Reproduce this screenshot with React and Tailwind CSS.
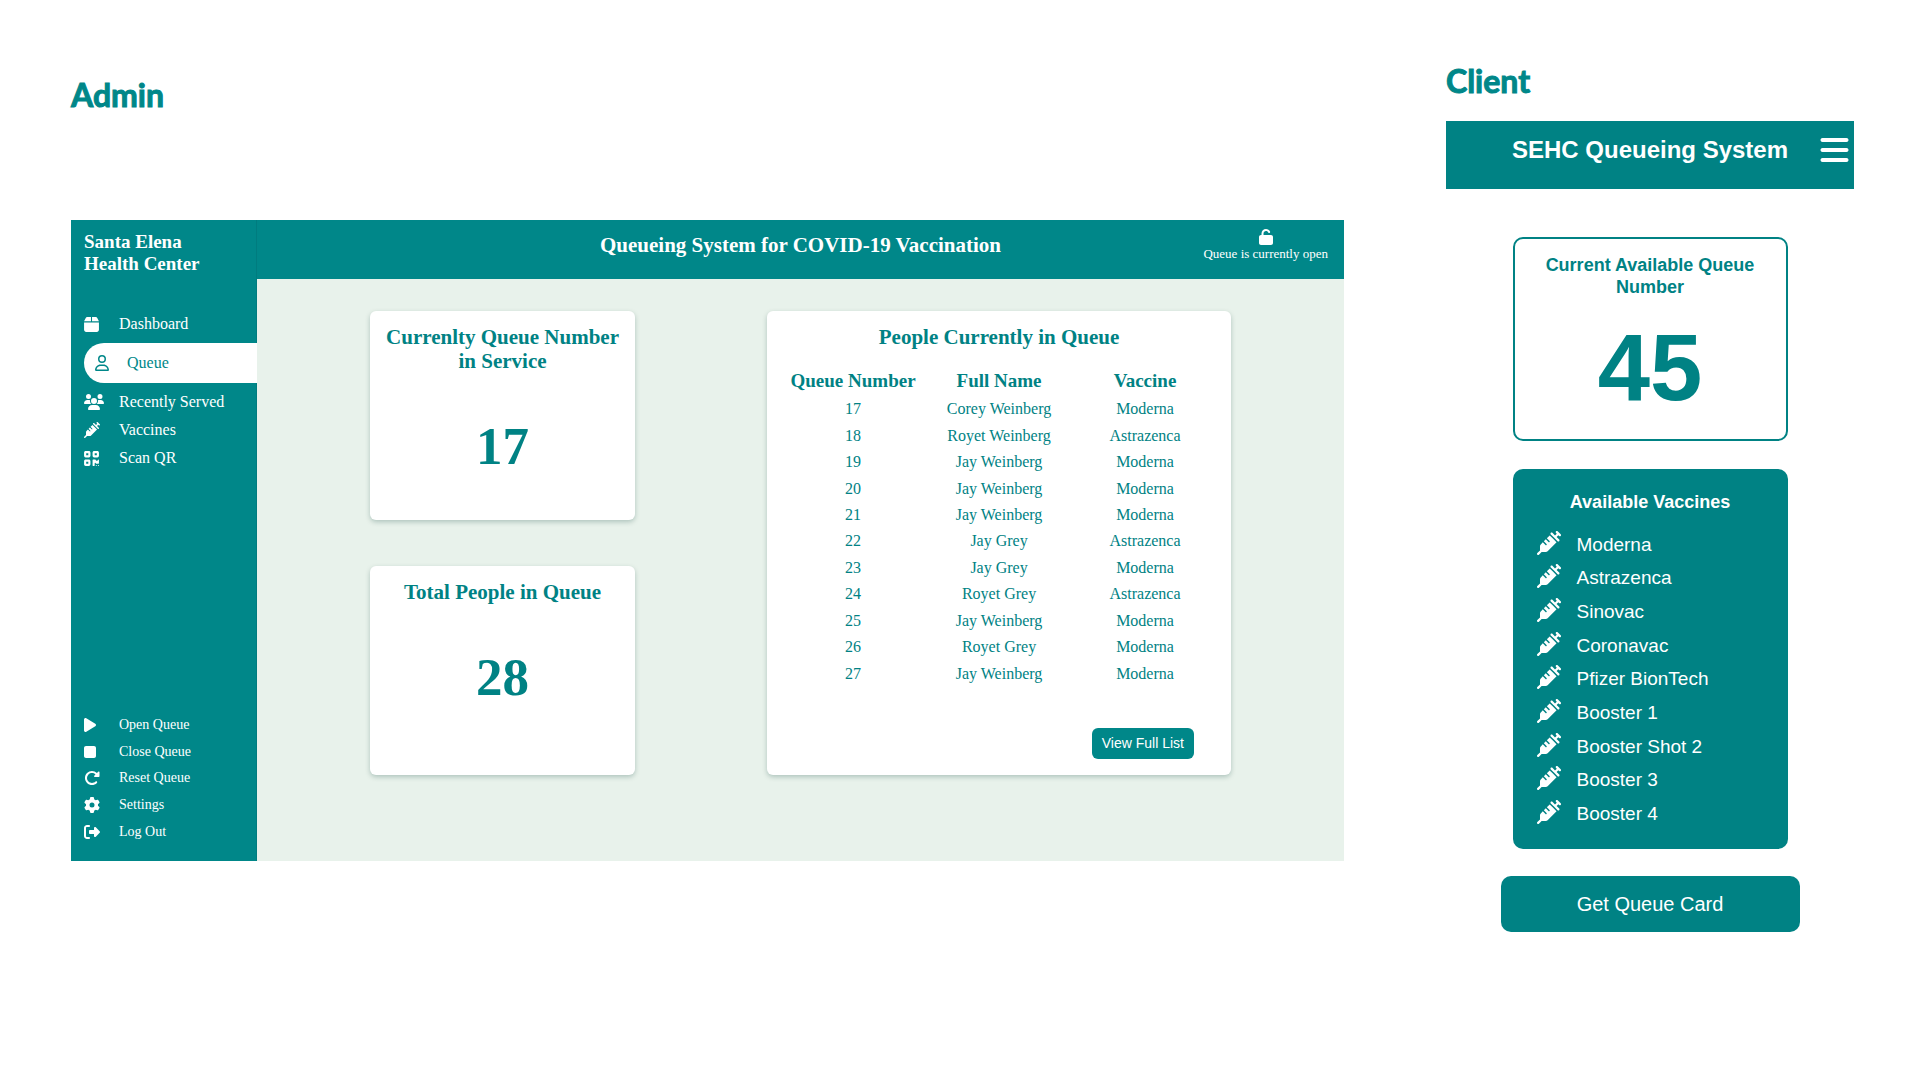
import React from "react";
import {
  FaBars,
  FaBox,
  FaGear,
  FaPlay,
  FaQrcode,
  FaRegUser,
  FaRightFromBracket,
  FaRotateRight,
  FaStop,
  FaSyringe,
  FaUnlock,
  FaUsers,
} from "react-icons/fa6";

const mainLinks = [
  { label: "Dashboard", Icon: FaBox, size: "h-[17px] w-[15px]" },
  { label: "Queue", Icon: FaRegUser, size: "h-4 w-[14px]", active: true },
  { label: "Recently Served", Icon: FaUsers, size: "h-4 w-5" },
  { label: "Vaccines", Icon: FaSyringe, size: "size-4" },
  { label: "Scan QR", Icon: FaQrcode, size: "h-[17px] w-[15px]" },
];

const actions = [
  { label: "Open Queue", Icon: FaPlay, size: "h-4 w-3" },
  { label: "Close Queue", Icon: FaStop, size: "h-4 w-3" },
  { label: "Reset Queue", Icon: FaRotateRight, size: "size-4" },
  { label: "Settings", Icon: FaGear, size: "size-4" },
  { label: "Log Out", Icon: FaRightFromBracket, size: "size-4" },
];

const people = [
  [17, "Corey Weinberg", "Moderna"],
  [18, "Royet Weinberg", "Astrazenca"],
  [19, "Jay Weinberg", "Moderna"],
  [20, "Jay Weinberg", "Moderna"],
  [21, "Jay Weinberg", "Moderna"],
  [22, "Jay Grey", "Astrazenca"],
  [23, "Jay Grey", "Moderna"],
  [24, "Royet Grey", "Astrazenca"],
  [25, "Jay Weinberg", "Moderna"],
  [26, "Royet Grey", "Moderna"],
  [27, "Jay Weinberg", "Moderna"],
];

const vaccines = [
  "Moderna",
  "Astrazenca",
  "Sinovac",
  "Coronavac",
  "Pfizer BionTech",
  "Booster 1",
  "Booster Shot 2",
  "Booster 3",
  "Booster 4",
];

function SectionLabel({ children }) {
  return (
    <h1 className="font-['Lato',sans-serif] text-[32px] leading-[38px] font-bold text-[#008789] [-webkit-text-stroke:1px_#008789]">
      {children}
    </h1>
  );
}

function Sidebar() {
  return (
    <aside className="flex w-[186px] shrink-0 flex-col border-r border-[#007c7f] bg-[#008789] pt-[11px] pb-4 pl-[13px] text-white">
      <h2 className="text-[19px] leading-[22px] font-bold">
        Santa Elena
        <br />
        Health Center
      </h2>
      <nav className="mt-[35px] flex flex-col text-base">
        {mainLinks.map(({ label, Icon, size, active }) =>
          active ? (
            <a
              key={label}
              href="#queue"
              aria-current="page"
              className="my-[5px] -mr-px flex h-10 items-center rounded-l-full bg-white pl-[11px] text-[#008789]"
            >
              <span className="w-8">
                <Icon className={size} />
              </span>
              {label}
            </a>
          ) : (
            <a key={label} href="#page" className="flex h-7 items-center">
              <span className="w-[35px]">
                <Icon className={size} />
              </span>
              {label}
            </a>
          )
        )}
      </nav>
      <div className="mt-auto grid min-h-[133px] auto-rows-fr text-sm">
        {actions.map(({ label, Icon, size }) => (
          <button key={label} type="button" className="flex items-center text-left">
            <span className="w-[35px]">
              <Icon className={size} />
            </span>
            {label}
          </button>
        ))}
      </div>
    </aside>
  );
}

function StatCard({ title, value }) {
  return (
    <section className="rounded-md bg-white px-3 pt-[14px] text-center font-bold shadow-[0_2px_5px_rgba(0,60,50,0.25)]">
      <h3 className="text-[21px] leading-6">{title}</h3>
      <p className="mt-[47px] text-[53px] leading-none">{value}</p>
    </section>
  );
}

function QueueTable() {
  return (
    <section className="row-span-2 flex flex-col rounded-md bg-white px-[13px] pt-[14px] pb-4 shadow-[0_2px_5px_rgba(0,60,50,0.25)]">
      <h3 className="text-center text-[21px] leading-6 font-bold">People Currently in Queue</h3>
      <table className="mt-[17px] h-[321px] w-full table-fixed text-center text-base leading-6">
        <thead>
          <tr className="h-[30px] text-[19px] font-bold">
            <th scope="col">Queue Number</th>
            <th scope="col">Full Name</th>
            <th scope="col">Vaccine</th>
          </tr>
        </thead>
        <tbody>
          {people.map(([number, name, vaccine]) => (
            <tr key={number}>
              <td>{number}</td>
              <td>{name}</td>
              <td>{vaccine}</td>
            </tr>
          ))}
        </tbody>
      </table>
      <button
        type="button"
        className="mt-auto mr-6 self-end rounded-md bg-[#008789] px-[10px] py-[5px] font-['Liberation_Sans',Arial,sans-serif] text-sm leading-[21px] text-white"
      >
        View Full List
      </button>
    </section>
  );
}

function AdminPanel() {
  return (
    <div className="mt-[106px] flex font-['Liberation_Serif','Times_New_Roman',serif]">
      <Sidebar />
      <div className="flex min-w-0 flex-1 flex-col">
        <header className="grid min-h-[59px] grid-cols-[1fr_auto_1fr] items-start bg-[#008789] px-4 text-white">
          <h2 className="col-start-2 pt-[11px] text-[21px] leading-7 font-bold">
            Queueing System for COVID-19 Vaccination
          </h2>
          <p className="flex flex-col items-center justify-self-end pt-[9px] text-[13px] leading-4">
            <FaUnlock className="mb-px h-4 w-[14px]" />
            Queue is currently open
          </p>
        </header>
        <main className="grid flex-1 grid-cols-[4fr_7fr] grid-rows-[209px_209px] gap-x-[132px] gap-y-[46px] bg-[#e8f2eb] px-[113px] pt-8 pb-[86px] text-[#008284]">
          <StatCard title="Currenlty Queue Number in Service" value="17" />
          <QueueTable />
          <StatCard title="Total People in Queue" value="28" />
        </main>
      </div>
    </div>
  );
}

function ClientPanel() {
  return (
    <div className="mt-[21px] flex flex-col items-center font-['Liberation_Sans',Arial,sans-serif]">
      <header className="grid min-h-[68px] w-full grid-cols-[1fr_auto_1fr] items-start bg-[#008284] px-[5px] pt-[13px] text-white">
        <h2 className="col-start-2 text-2xl leading-8 font-bold">SEHC Queueing System</h2>
        <button type="button" aria-label="Menu" className="justify-self-end">
          <FaBars className="h-8 w-[29px]" />
        </button>
      </header>

      <section className="mt-12 w-[275px] rounded-[10px] border-2 border-[#008284] px-4 pt-[15px] pb-[23px] text-center font-bold text-[#008284]">
        <h3 className="text-[18px] leading-[22px]">Current Available Queue Number</h3>
        <p className="mt-[22px] text-[94px] leading-[96px]">45</p>
      </section>

      <section className="mt-7 w-[275px] rounded-[10px] bg-[#008284] px-6 pt-[22px] pb-[18px] text-white">
        <h3 className="text-center text-[18px] leading-[22px] font-bold">Available Vaccines</h3>
        <ul className="mt-[15px] grid min-h-[303px] auto-rows-fr text-[19px] leading-6">
          {vaccines.map((name) => (
            <li key={name} className="flex items-center gap-4">
              <FaSyringe className="mb-1 size-6" />
              {name}
            </li>
          ))}
        </ul>
      </section>

      <button
        type="button"
        className="mt-[27px] w-[299px] rounded-[10px] bg-[#008284] py-[14px] text-xl leading-7 text-white"
      >
        Get Queue Card
      </button>
    </div>
  );
}

export default function App() {
  return (
    <div className="flex min-h-screen gap-[102px] bg-white pr-[66px] pl-[71px]">
      <div className="min-w-0 flex-1 pt-[76px]">
        <SectionLabel>Admin</SectionLabel>
        <AdminPanel />
      </div>
      <div className="w-[408px] shrink-0 pt-[62px]">
        <SectionLabel>Client</SectionLabel>
        <ClientPanel />
      </div>
    </div>
  );
}
